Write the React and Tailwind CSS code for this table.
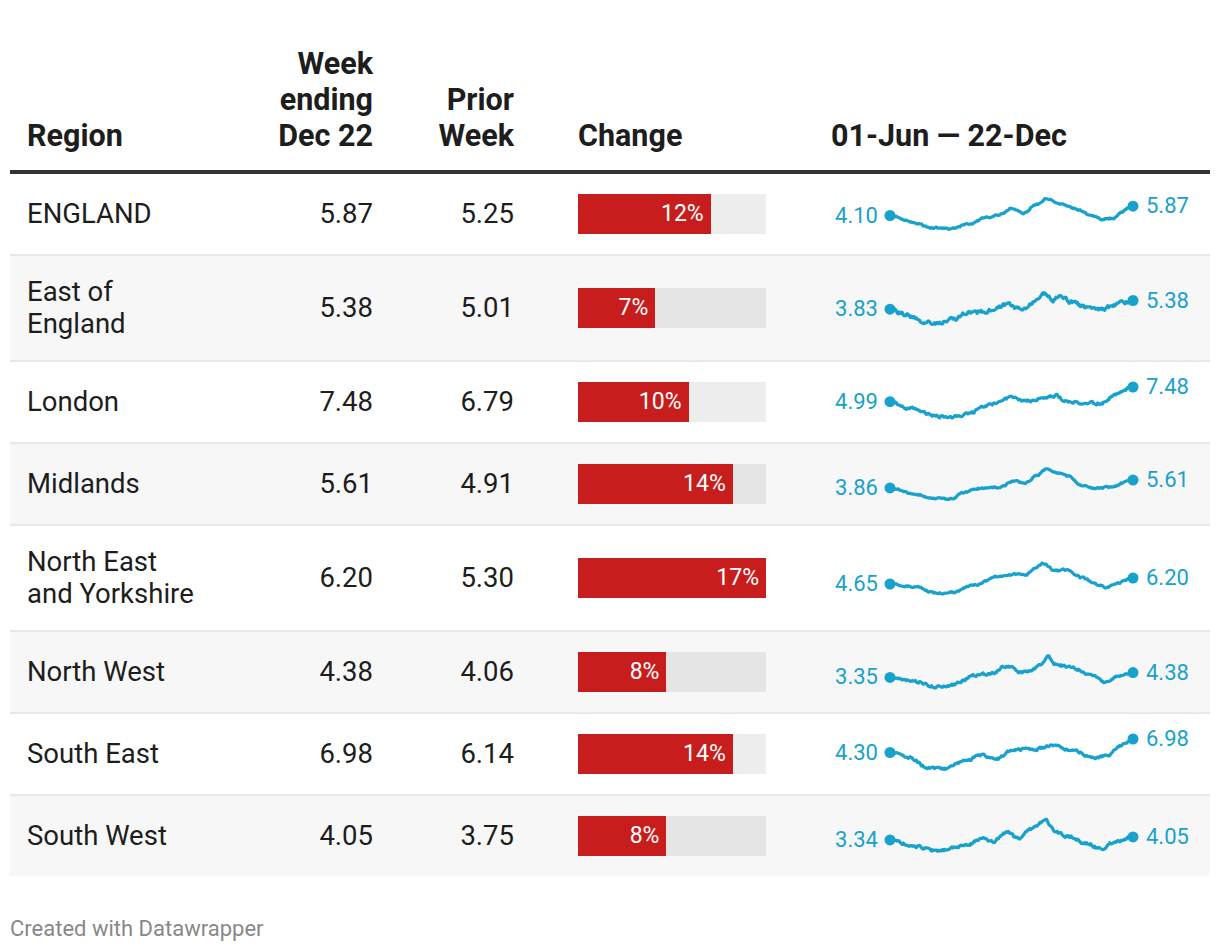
const rows = [
  { name: ["ENGLAND"], cur: "5.87", prev: "5.25", pct: 12, first: "4.10", last: "5.87", amp: 0.05, seed: 11,
    keys: [[0,0.55],[0.1,0.79],[0.17,0.96],[0.25,0.99],[0.33,0.82],[0.4,0.61],[0.45,0.52],[0.5,0.32],[0.55,0.47],[0.6,0.2],[0.64,0],[0.7,0.16],[0.76,0.32],[0.82,0.52],[0.87,0.67],[0.91,0.64],[1,0.24]] },
  { name: ["East of", "England"], cur: "5.38", prev: "5.01", pct: 7, first: "3.83", last: "5.38", amp: 0.11, seed: 23,
    keys: [[0,0.54],[0.06,0.71],[0.14,0.94],[0.2,1],[0.26,0.89],[0.32,0.66],[0.4,0.6],[0.48,0.39],[0.55,0.57],[0.6,0.25],[0.64,0.02],[0.67,0.23],[0.7,0.08],[0.74,0.29],[0.81,0.48],[0.88,0.54],[0.92,0.39],[1,0.25]] },
  { name: ["London"], cur: "7.48", prev: "6.79", pct: 10, first: "4.99", last: "7.48", amp: 0.08, seed: 37,
    keys: [[0,0.49],[0.08,0.7],[0.2,0.98],[0.26,1],[0.33,0.88],[0.4,0.61],[0.5,0.36],[0.55,0.48],[0.65,0.34],[0.68,0.28],[0.73,0.48],[0.8,0.54],[0.87,0.54],[0.93,0.24],[1,0]] },
  { name: ["Midlands"], cur: "5.61", prev: "4.91", pct: 14, first: "3.86", last: "5.61", amp: 0.05, seed: 41,
    keys: [[0,0.63],[0.12,0.88],[0.17,0.98],[0.25,1],[0.3,0.79],[0.36,0.65],[0.45,0.61],[0.51,0.4],[0.56,0.46],[0.6,0.22],[0.65,0],[0.69,0.15],[0.73,0.22],[0.79,0.55],[0.84,0.63],[0.9,0.61],[1,0.37]] },
  { name: ["North East", "and Yorkshire"], cur: "6.20", prev: "5.30", pct: 17, first: "4.65", last: "6.20", amp: 0.05, seed: 53,
    keys: [[0,0.7],[0.1,0.79],[0.19,1],[0.26,0.98],[0.35,0.72],[0.45,0.45],[0.52,0.38],[0.56,0.39],[0.6,0.18],[0.63,0],[0.68,0.26],[0.72,0.22],[0.79,0.48],[0.85,0.72],[0.89,0.82],[0.94,0.66],[1,0.5]] },
  { name: ["North West"], cur: "4.38", prev: "4.06", pct: 8, first: "3.35", last: "4.38", amp: 0.07, seed: 67,
    keys: [[0,0.68],[0.1,0.82],[0.2,1],[0.26,0.92],[0.35,0.61],[0.42,0.56],[0.47,0.33],[0.5,0.32],[0.53,0.53],[0.58,0.45],[0.62,0.27],[0.65,0],[0.68,0.24],[0.75,0.35],[0.82,0.56],[0.89,0.85],[0.94,0.65],[1,0.52]] },
  { name: ["South East"], cur: "6.98", prev: "6.14", pct: 14, first: "4.30", last: "6.98", amp: 0.07, seed: 79,
    keys: [[0,0.45],[0.08,0.61],[0.15,0.94],[0.22,1],[0.3,0.76],[0.38,0.54],[0.44,0.66],[0.5,0.37],[0.6,0.33],[0.68,0.21],[0.75,0.39],[0.84,0.61],[0.89,0.57],[0.95,0.21],[1,0]] },
  { name: ["South West"], cur: "4.05", prev: "3.75", pct: 8, first: "3.34", last: "4.05", amp: 0.08, seed: 97,
    keys: [[0,0.63],[0.1,0.84],[0.2,1],[0.26,0.88],[0.32,0.78],[0.38,0.59],[0.42,0.68],[0.48,0.38],[0.53,0.59],[0.58,0.25],[0.64,0],[0.68,0.34],[0.74,0.53],[0.81,0.75],[0.87,0.93],[0.93,0.68],[1,0.53]] },
];

const LINE_W = 243;
const LINE_H = 30;
const PAD_X = 6;
const PAD_Y = 5;

function mulberry(seed) {
  let a = seed;
  return () => {
    a |= 0; a = (a + 0x6d2b79f5) | 0;
    let t = Math.imul(a ^ (a >>> 15), 1 | a);
    t = (t + Math.imul(t ^ (t >>> 7), 61 | t)) ^ t;
    return ((t ^ (t >>> 14)) >>> 0) / 4294967296;
  };
}

function interp(keys, t) {
  for (let i = 1; i < keys.length; i++) {
    if (t <= keys[i][0]) {
      const [x0, y0] = keys[i - 1];
      const [x1, y1] = keys[i];
      const f = (t - x0) / (x1 - x0);
      // smoothstep between the key points
      const s = f * f * (3 - 2 * f);
      return y0 + (y1 - y0) * s;
    }
  }
  return keys[keys.length - 1][1];
}

function buildPath(row) {
  const rnd = mulberry(row.seed);
  const N = 240;
  let walk = 0;
  const pts = [];
  for (let i = 0; i <= N; i++) {
    const t = i / N;
    walk = walk * 0.5 + (rnd() - 0.5) * row.amp;
    const edge = Math.min(i, N - i) < 3 ? 0 : 1;
    const y = interp(row.keys, t) + walk * edge;
    pts.push([PAD_X + t * LINE_W, PAD_Y + y * LINE_H]);
  }
  return pts.map((p, i) => (i ? "L" : "M") + p[0].toFixed(1) + " " + p[1].toFixed(1)).join(" ");
}

function Sparkline({ row }) {
  const y0 = row.keys[0][1] * LINE_H;
  const y1 = row.keys[row.keys.length - 1][1] * LINE_H;
  const off = (y) => ({ transform: `translateY(${y - LINE_H / 2}px)` });
  return (
    <div className="flex items-center pl-[46px] text-[22px] leading-[24px] text-[#18a1cd]">
      <span className="w-[56px] text-right" style={off(y0)}>{row.first}</span>
      <svg width={LINE_W + PAD_X * 2} height={LINE_H + PAD_Y * 2} className="ml-[6px] overflow-visible">
        <path d={buildPath(row)} fill="none" stroke="#18a1cd" strokeWidth="3.2" strokeLinejoin="round" strokeLinecap="round" />
        <circle cx={PAD_X} cy={PAD_Y + y0} r="5.5" fill="#18a1cd" />
        <circle cx={PAD_X + LINE_W} cy={PAD_Y + y1} r="5.5" fill="#18a1cd" />
      </svg>
      <span className="ml-[7px]" style={off(y1)}>{row.last}</span>
    </div>
  );
}

const grid = "grid grid-cols-[253px_120px_141px_252px_434px]";

export default function App() {
  return (
    <div className="bg-white min-h-screen px-[10px] pt-[46px] font-['Roboto',sans-serif] text-[#1d1d1d]">
      <div className={`${grid} items-end border-b-4 border-[#333333] pb-[16px] text-[30.5px] leading-[36px] font-bold`}>
        <div className="pl-[17px]">Region</div>
        <div className="text-right pr-[10px]">Week<br />ending<br />Dec 22</div>
        <div className="text-right pr-[10px]">Prior<br />Week</div>
        <div className="pl-[54px]">Change</div>
        <div className="pl-[55px]">01-Jun — 22-Dec</div>
      </div>

      {rows.map((row, i) => (
        <div
          key={row.name.join(" ")}
          className={`${grid} items-center py-5 text-[27.5px] leading-[32px] ${i % 2 ? "bg-[#f7f7f7]" : "bg-white"} ${i < rows.length - 1 ? "border-b-2 border-[#e8e8e8]" : ""}`}
        >
          <div className="pl-[17px]">
            {row.name.map((l) => <div key={l}>{l}</div>)}
          </div>
          <div className="text-right pr-[10px]">{row.cur}</div>
          <div className="text-right pr-[10px]">{row.prev}</div>
          <div className="pl-[54px]">
            <div className="w-[188px] h-10 bg-black/[0.07] flex">
              <div
                className="h-full bg-[#c71e1d] flex items-center justify-end pr-[7px] text-white text-[23px]"
                style={{ width: `${(row.pct / 17) * 188}px` }}
              >
                {row.pct}%
              </div>
            </div>
          </div>
          <Sparkline row={row} />
        </div>
      ))}

      <div className="mt-[41px] text-[22px] leading-[24px] text-[#888888]">Created with Datawrapper</div>
    </div>
  );
}
